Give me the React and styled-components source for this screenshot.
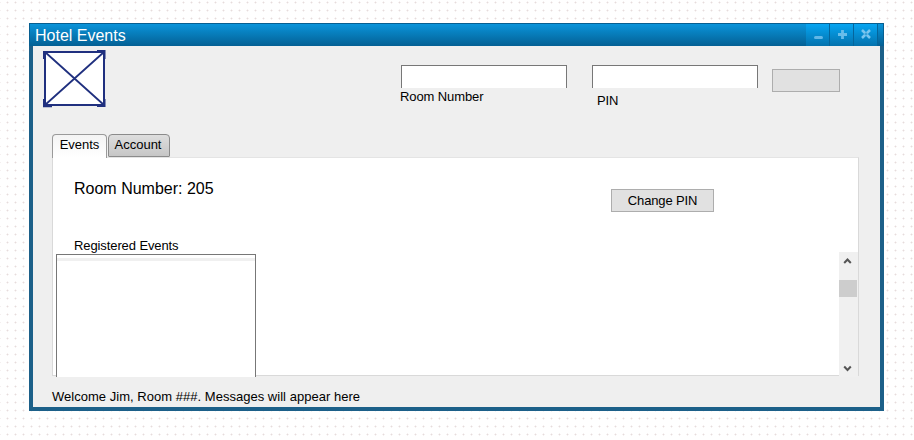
import React from "react";
import styled, { createGlobalStyle } from "styled-components";

const GlobalStyle = createGlobalStyle`
  * { box-sizing: border-box; }
  body {
    margin: 0;
    overflow: hidden;
    background-color: #fff;
    font-family: "Liberation Sans", Arial, sans-serif;
    color: #000;
  }
`;

const Canvas = styled.main`
  height: 440px;
  padding: 23px 30px 29px 29px;
  background: radial-gradient(circle at 3.5px 3.5px, #e6dcdc 0.6px, transparent 1.3px) 4px 7px / 8px 8px;
`;

const Window = styled.section`
  width: 855px;
  height: 388px;
  display: flex;
  flex-direction: column;
  background: #efefef;
  border: 4px solid #1c6089;
  border-top: 0;
`;

const TitleBar = styled.header`
  display: flex;
  justify-content: space-between;
  height: 23px;
  flex: none;
  margin: 0 -4px;
  border: 1px solid #075f91;
  border-width: 1px 1px 0;
  background: linear-gradient(#0a94da, #046094);
  padding: 0 5px;
`;

const Title = styled.h1`
  margin: 0;
  font-size: 16px;
  font-weight: 400;
  line-height: 23px;
  color: #fff;
`;

const Controls = styled.div`
  display: flex;
`;

const ControlButton = styled.button`
  width: 24px;
  height: 22px;
  padding: 0;
  border: 0;
  border-right: 1px solid #05659b;
  background: linear-gradient(#06a5f2, #0472ad);
  svg { display: block; }
`;

const Body = styled.div`
  flex: 1;
  padding: 4px 21px 0 19px;
`;

const TopRow = styled.div`
  display: flex;
  height: 84px;
`;

const Logo = styled.svg`
  width: 64px;
  height: 58px;
  flex: none;
  margin-left: -9px;
`;

const Field = styled.label`
  width: 166px;
  margin-top: 15px;
  margin-left: ${(p) => p.$gap}px;
`;

const Input = styled.input`
  display: block;
  width: 166px;
  height: 23px;
  padding: 0 4px;
  border: 1px solid #777;
  border-bottom: 0;
  border-radius: 0;
  background: #fff;
  outline: 0;
`;

const FieldLabel = styled.span`
  display: block;
  margin: ${(p) => p.$offset};
  font-size: 13px;
  line-height: 15px;
  letter-spacing: -0.1px;
`;

const Button = styled.button`
  width: ${(p) => p.$width}px;
  height: 23px;
  padding: 0;
  border: 1px solid #adadad;
  background: #e1e1e1;
  font: 13px/20px "Liberation Sans", Arial, sans-serif;
  letter-spacing: -0.15px;
  color: #000;
  margin: ${(p) => p.$margin};
`;

const Tabs = styled.nav`
  display: flex;
  gap: 1px;
  height: 23px;
`;

const Tab = styled.button`
  width: ${(p) => p.$width}px;
  height: ${(p) => (p.$active ? 24 : 23)}px;
  padding: 0 ${(p) => (p.$active ? 0 : 2)}px ${(p) => (p.$active ? 4 : 3)}px 0;
  border: 1px solid ${(p) => (p.$active ? "#9a9a9a" : "#8b8b8b")};
  border-bottom: ${(p) => (p.$active ? "0" : "1px solid #8b8b8b")};
  border-radius: 4px 4px ${(p) => (p.$active ? "0 0" : "1px 1px")};
  background: ${(p) => (p.$active ? "linear-gradient(#f4f4f4, #fff)" : "linear-gradient(#dedede, #c6c6c6)")};
  font: 13px/19px "Liberation Sans", Arial, sans-serif;
  color: #000;
`;

const Panel = styled.div`
  height: 219px;
  width: 807px;
  border: 1px solid #d9d9d9;
  border-top-color: #e4e4e4;
  background: #fff;
`;

const Summary = styled.div`
  display: flex;
  justify-content: space-between;
  height: 80px;
  padding: 22px 144px 0 21px;
`;

const RoomTitle = styled.h2`
  margin: 0;
  font-size: 16px;
  font-weight: 400;
  line-height: 18px;
`;

const SectionLabel = styled.div`
  height: 15px;
  padding-left: 21px;
  font-size: 13px;
  line-height: 15px;
  letter-spacing: -0.1px;
`;

const Lists = styled.div`
  display: flex;
  justify-content: space-between;
  height: 125px;
`;

const EventList = styled.div`
  width: 200px;
  height: 123px;
  margin: 1px 0 0 3px;
  border: 1px solid #777;
  border-bottom: 0;
  background: linear-gradient(#fff 0 3px, #f0f0f0 3px 6px, #fff 6px);
`;

const ScrollBar = styled.div`
  width: 19px;
  height: 125px;
  margin-top: -1px;
  display: flex;
  flex-direction: column;
  background: #f0f0f0;
`;

const ScrollArrow = styled.svg`
  width: 18px;
  height: 18px;
  fill: none;
  stroke: #555;
  stroke-width: 2;
`;

const Thumb = styled.div`
  width: 18px;
  height: 17px;
  margin: 10px 0 62px;
  background: #cdcdcd;
`;

const Status = styled.footer`
  padding-top: 13px;
  font-size: 13px;
  line-height: 15px;
  letter-spacing: 0.025px;
`;

export default function App() {
  return (
    <>
      <GlobalStyle />
      <Canvas>
        <Window>
          <TitleBar>
            <Title>Hotel Events</Title>
            <Controls>
              <ControlButton aria-label="Minimize">
                <svg width="24" height="22">
                  <rect x="8" y="12" width="9" height="3" rx="1.5" fill="#61b7e7" />
                </svg>
              </ControlButton>
              <ControlButton aria-label="Maximize">
                <svg width="24" height="22">
                  <path d="M12.500 6v9M8 10.500h9" stroke="#68bdea" strokeWidth="2.800" />
                </svg>
              </ControlButton>
              <ControlButton aria-label="Close">
                <svg width="24" height="22">
                  <path d="M8 6l8 8M16 6l-8 8" stroke="#79c6ef" strokeWidth="2.500" />
                  <path d="M12 8.500v3M10.500 10h3" stroke="#2b94ce" strokeWidth="1" />
                </svg>
              </ControlButton>
            </Controls>
          </TitleBar>
          <Body>
            <TopRow>
              <Logo viewBox="0 0 64 58">
                <rect x="2" y="2" width="59" height="53" fill="#fff" stroke="#20307f" strokeWidth="2" />
                <path d="M2 2l59 53M61 2L2 55" fill="none" stroke="#20307f" strokeWidth="1.800" />
                <path
                  d="M0.500 9V2H3M54 1h7.500v8M0.800 49v7.200H9M54 56h7.500v-7"
                  fill="none"
                  stroke="#20307f"
                  strokeWidth="2"
                />
              </Logo>
              <Field $gap={294}>
                <Input />
                <FieldLabel $offset="1px 0 0 -1px">Room Number</FieldLabel>
              </Field>
              <Field $gap={25}>
                <Input />
                <FieldLabel $offset="5px 0 0 5px">PIN</FieldLabel>
              </Field>
              <Button $width={68} $margin="19px 0 0 14px" aria-label="Submit" />
            </TopRow>
            <Tabs>
              <Tab $active $width={55}>Events</Tab>
              <Tab $width={62}>Account</Tab>
            </Tabs>
            <Panel>
              <Summary>
                <RoomTitle>Room Number: 205</RoomTitle>
                <Button $width={103} $margin="9px 0 0">Change PIN</Button>
              </Summary>
              <SectionLabel>Registered Events</SectionLabel>
              <Lists>
                <EventList />
                <ScrollBar>
                  <ScrollArrow><path d="M5.200 11L8.500 7.500L11.800 11" /></ScrollArrow>
                  <Thumb />
                  <ScrollArrow><path d="M5.200 7.500L8.500 11L11.800 7.500" /></ScrollArrow>
                </ScrollBar>
              </Lists>
            </Panel>
            <Status>Welcome Jim, Room ###. Messages will appear here</Status>
          </Body>
        </Window>
      </Canvas>
    </>
  );
}
